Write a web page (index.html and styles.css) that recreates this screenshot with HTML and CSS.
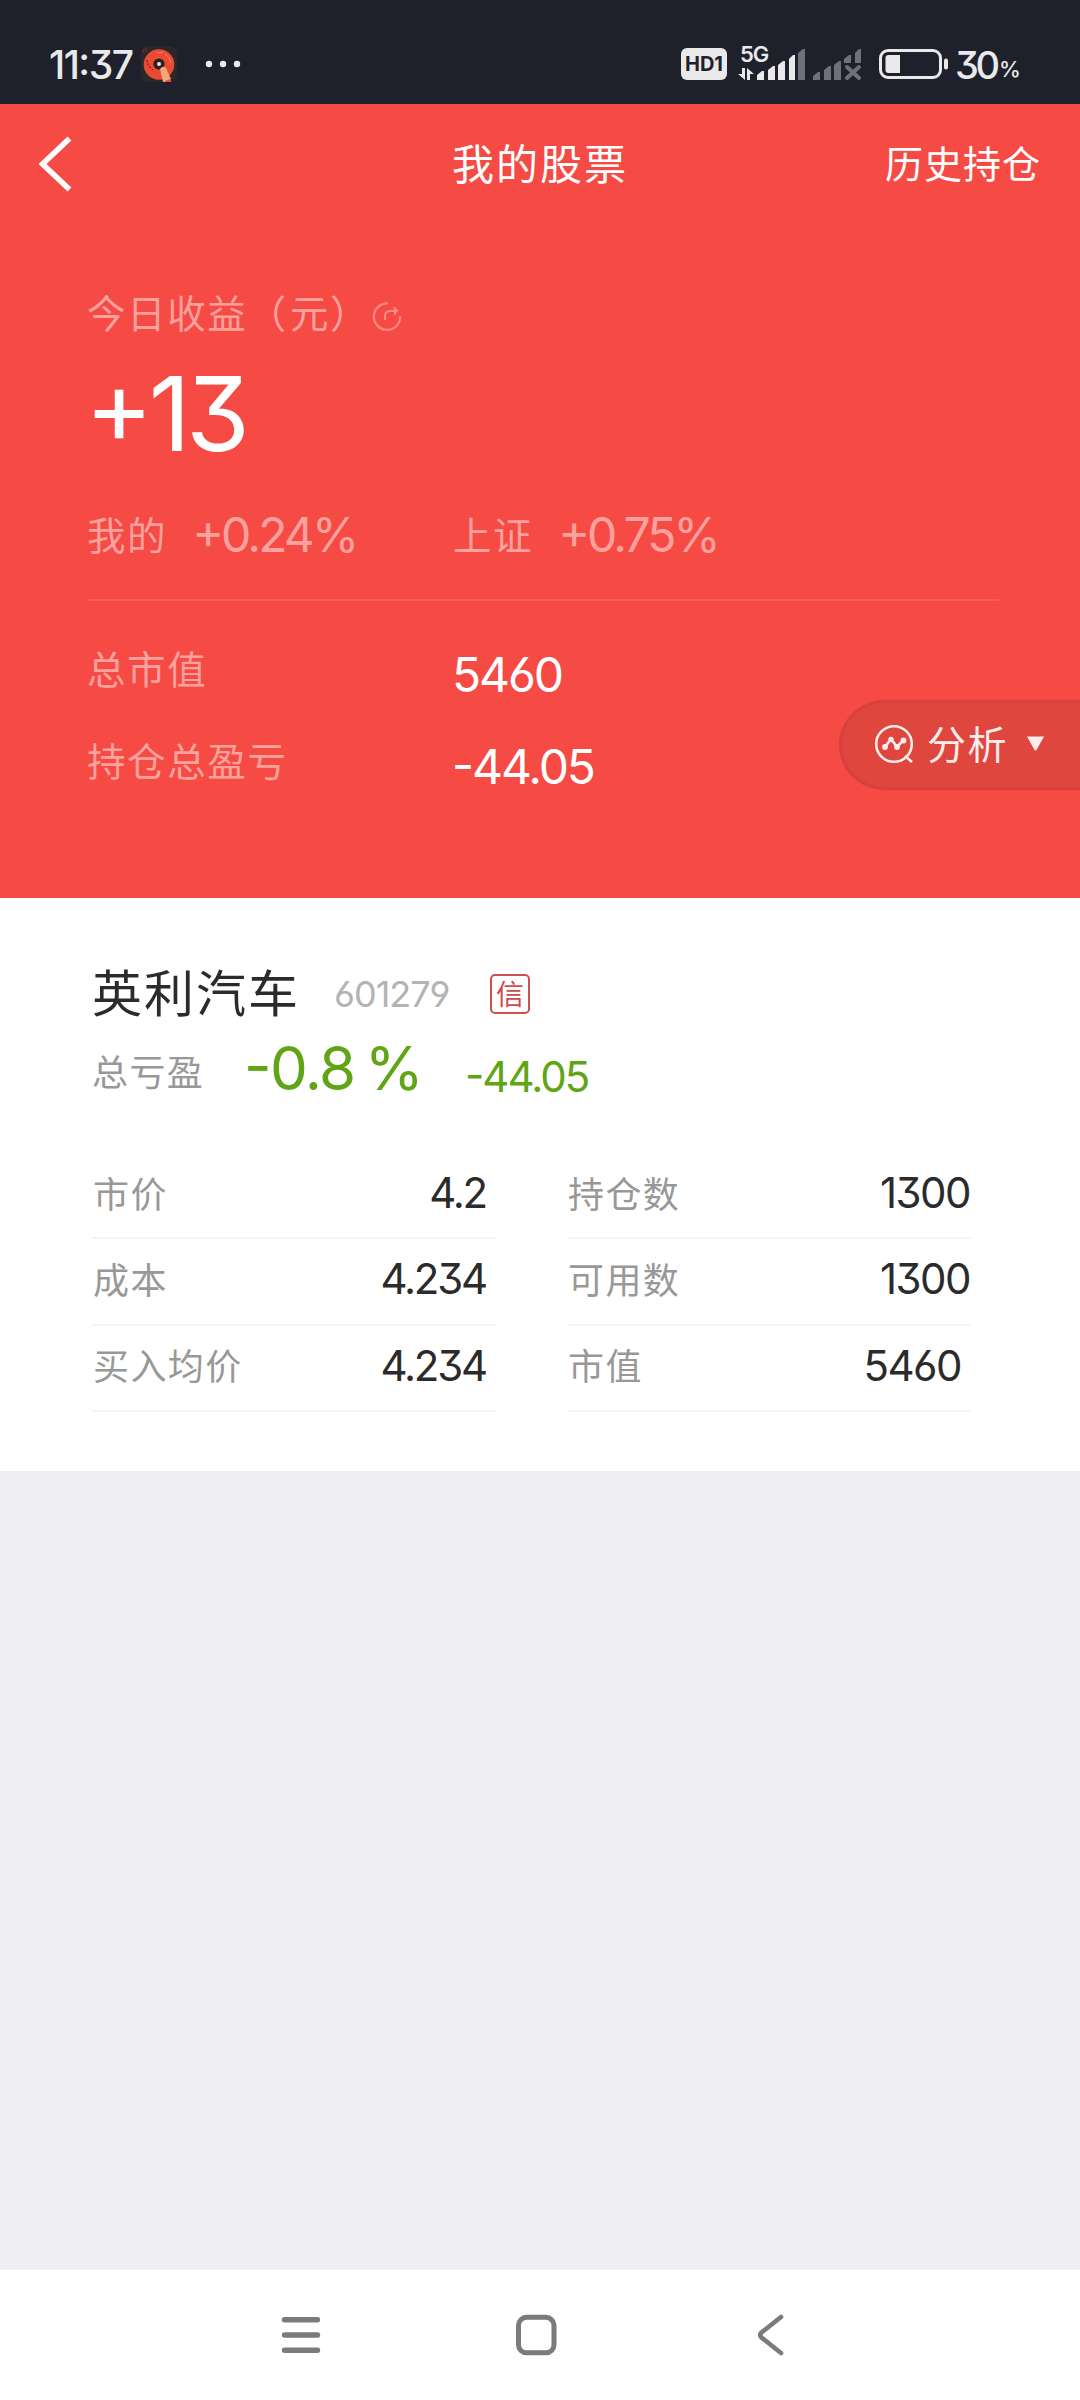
FILE: index.html
```html
<!DOCTYPE html>
<html lang="zh-CN">
<head>
<meta charset="utf-8">
<title>我的股票</title>
<link rel="stylesheet" href="styles.css">
</head>
<body>
<div class="status num">
  <span class="clock">11:37</span>
  <svg class="app-icon" width="36" height="36" viewBox="0 0 36 36">
    <rect width="36" height="36" rx="7" fill="#2a2828"/>
    <circle cx="18" cy="18.500" r="15.300" fill="#ea4c33"/>
    <path d="M6 14A13 13 0 0 0 12 24" fill="none" stroke="#6b221c" stroke-width="1.200" stroke-dasharray="2 1.500"/>
    <path d="M16 6.500Q19 7.500 22 6M24 8Q29 11 30 17" fill="none" stroke="#f58072" stroke-width="1"/>
    <path d="M2 7V3M5 6V2" stroke="#7a2f28" stroke-width="1"/>
    <circle cx="18" cy="18" r="5.600" fill="#2a2020"/>
    <circle cx="18" cy="18" r="2" fill="#f4e4dc"/>
    <path d="M19 23Q22 19 25 22L30 33L24 36H22Z" fill="#f2a679"/>
    <path d="M24 35L30 33V36H24Z" fill="#ea4c33"/>
  </svg>
  <svg class="more" width="36" height="8" viewBox="0 0 36 8" fill="#e9e9ea"><circle cx="4" cy="4" r="3.200"/><circle cx="18" cy="4" r="3.200"/><circle cx="32" cy="4" r="3.200"/></svg>
  <span class="hd">HD1</span>
  <div class="signal">
    <span class="fiveg">5G</span>
    <svg width="124" height="36" viewBox="738 46 124 36">
      <g fill="#e9e9ea">
        <path d="M742 68h3v12l-7-6h4zM747 80V68l7 6h-4v6z"/>
        <path d="M757 80V75l5-4h2v9zM768 80V70l5-4h2v14zM778 80V65l5-4h2v19zM789 80V59l4-4h2v25z"/>
      </g>
      <g fill="#707178">
        <path d="M798 80V53l5-4h2v31zM813 80V76l5-4h2v8zM824 80V70l5-4h2v14zM834 80V65l5-4h2v19zM844 63V59l5-4h2v8zM855 63V53l4-4h2v14z"/>
      </g>
      <path d="M847 67L859 78M859 67L847 78" stroke="#707178" stroke-width="4" stroke-linecap="round"/>
    </svg>
  </div>
  <svg class="battery" width="70" height="30" viewBox="0 0 70 30">
    <rect x="1.500" y="1.500" width="60" height="27" rx="7.500" fill="none" stroke="#e9e9ea" stroke-width="3"/>
    <path d="M9.500 6H21V24H9.500Q6.500 24 6.500 21V9Q6.500 6 9.500 6Z" fill="#e9e9ea"/>
    <rect x="65" y="9.500" width="4" height="11" rx="2" fill="#e9e9ea"/>
  </svg>
  <span class="level">30</span><span class="pct">%</span>
</div>

<section class="summary">
  <header class="bar">
    <svg class="back" width="34" height="56" viewBox="0 0 34 56"><path d="M30.500 2.500L3.500 28L30.500 53.500" fill="none" stroke="#fff" stroke-width="5.500"/></svg>
    <h1 class="title">我的股票</h1>
    <span class="history">历史持仓</span>
  </header>
  <div class="today">
    <span class="lbl">今日收益<span class="paren">（</span>元）</span>
    <svg class="refresh" width="30" height="30" viewBox="0 0 30 30" fill="none" stroke="#fb8782" stroke-width="2.200"><path d="M16 1.500A13.200 13.200 0 1 0 28.200 14M13 18V14Q13 9 18 9H25"/><path d="M22 5l4 3.500l-3.500 4.500z" fill="#fb8782" stroke-width="1"/></svg>
  </div>
  <div class="gain num">+13</div>
  <div class="rates">
    <div class="rate"><span class="lbl">我的</span><span class="num rv">+0.24%</span></div>
    <div class="rate"><span class="lbl">上证</span><span class="num rv">+0.75%</span></div>
  </div>
  <div class="total first"><span class="lbl">总市值</span><span class="num tv">5460</span></div>
  <div class="total"><span class="lbl">持仓总盈亏</span><span class="num tv">-44.05</span></div>
  <div class="analysis">
    <svg width="42" height="42" viewBox="0 0 42 42" fill="none" stroke="#ffeceb" stroke-width="2.600"><circle cx="20" cy="20" r="17.800"/><path d="M31 32l7 6M11 23l6-8l6 8l6.500-7"/><g fill="#ffeceb" stroke="none"><circle cx="11" cy="23" r="2.900"/><circle cx="17" cy="15.500" r="2.700"/><circle cx="23" cy="23" r="2.900"/><circle cx="29.500" cy="16.500" r="2.900"/></g></svg>
    <span class="an-text">分析</span>
    <svg class="tri" width="19" height="15" viewBox="0 0 19 15"><path d="M1 .5H18L10.500 14Q9.500 15 8.500 14Z" fill="#ffeceb"/></svg>
  </div>
</section>

<section class="holding">
  <div class="name-row">
    <span class="name">英利汽车</span><span class="num code">601279</span><span class="badge">信</span>
  </div>
  <div class="pl-row">
    <span class="k">总亏盈</span><span class="num pl-rate">-0.8 %</span><span class="num pl">-44.05</span>
  </div>
  <div class="grid">
    <div class="cell"><span class="k">市价</span><span class="num v price">4.2</span></div>
    <div class="cell"><span class="k">持仓数</span><span class="num v">1300</span></div>
    <div class="cell"><span class="k">成本</span><span class="num v price">4.234</span></div>
    <div class="cell"><span class="k">可用数</span><span class="num v">1300</span></div>
    <div class="cell"><span class="k">买入均价</span><span class="num v price">4.234</span></div>
    <div class="cell"><span class="k">市值</span><span class="num v inset">5460</span></div>
  </div>
</section>

<nav class="nav">
  <svg width="40" height="40" viewBox="0 0 40 40" stroke="#7b7b7b" stroke-width="5.400" stroke-linecap="round"><path d="M3.500 4.700H36.500M3.500 20H36.500M3.500 35.300H36.500"/></svg>
  <svg width="42" height="42" viewBox="0 0 42 42"><rect x="3.500" y="3.300" width="35.500" height="35.500" rx="8" fill="none" stroke="#7b7b7b" stroke-width="5"/></svg>
  <svg width="28" height="42" viewBox="0 0 28 42"><path d="M25 3L5.500 18.500Q3 21 5.500 23.500L25 39" fill="none" stroke="#7b7b7b" stroke-width="4.600" stroke-linecap="round"/></svg>
</nav>
</body>
</html>
```

FILE: styles.css
```css
* { box-sizing: border-box; }
body {
  margin: 0;
  width: 1080px;
  height: 2400px;
  display: flex;
  flex-direction: column;
  background: #efeef3;
  font-family: "Noto Sans CJK SC", sans-serif;
  font-weight: 400;
  white-space: nowrap;
}
svg { display: block; flex: none; }
.num {
  font-family: Inter, "Noto Sans", sans-serif;
  font-feature-settings: "cv09", "cv03", "cv04", "case";
}

/* status bar */
.status {
  height: 104px;
  background: #1e212b;
  color: #e9e9ea;
  display: flex;
  padding-left: 49px;
  line-height: 40px;
}
.clock { width: 92px; margin-top: 45px; font-size: 39px; font-weight: 500; letter-spacing: -1.5px; }
.app-icon { margin-top: 46px; }
.more { margin: 60px 0 0 28px; }
.hd {
  width: 46px;
  height: 32px;
  margin: 48px 0 0 440px;
  border-radius: 6px;
  background: #e9e9ea;
  color: #1e212b;
  font-size: 20px;
  font-weight: 700;
  line-height: 32px;
  text-align: center;
}
.signal { position: relative; margin: 46px 0 0 11px; }
.fiveg {
  position: absolute;
  left: 2px;
  top: -4px;
  font-size: 22px;
  font-weight: 600;
  line-height: 24px;
  letter-spacing: -1px;
}
.battery { margin: 49px 0 0 17px; }
.level { width: 44px; margin: 45px 0 0 6px; font-size: 38px; font-weight: 500; letter-spacing: -3.5px; }
.pct { margin-top: 49px; font-size: 22px; font-weight: 500; }

/* red summary panel */
.summary {
  position: relative;
  height: 794px;
  background: #f64a45;
  color: #fff;
  padding-left: 87px;
}
.bar {
  height: 120px;
  margin-left: -87px;
  padding: 0 39px 4px 39px;
  display: grid;
  grid-template-columns: 200px 1fr 200px;
  align-items: center;
}
.back { margin-top: 4px; }
.title { margin: 0; font-size: 42px; font-weight: 400; letter-spacing: 2px; text-align: center; line-height: 60px; }
.history { font-size: 38px; letter-spacing: 1px; line-height: 56px; text-align: right; }
.lbl { color: #fda19d; font-size: 38.5px; letter-spacing: 1.6px; line-height: 56px; }
.today { display: flex; align-items: center; height: 56px; margin-top: 59px; gap: 2px; }
.refresh { margin-top: 11px; }
.paren { letter-spacing: 4px; }
.gain { height: 120px; margin: 15px 0 0 -2px; font-size: 103px; line-height: 120px; letter-spacing: -4.5px; }
.rates {
  display: flex;
  width: 912px;
  height: 127px;
  border-bottom: 2px solid #f95f58;
  padding-top: 31px;
}
.rate { display: flex; width: 366px; height: 56px; }
.rv { margin: 2px 0 0 25px; font-size: 48px; font-weight: 375; line-height: 56px; letter-spacing: -2.9px; color: #fda19d; }
.total { display: flex; height: 92px; line-height: 56px; }
.total.first { margin-top: 38px; }
.total .lbl { width: 365px; }
.tv { font-size: 48px; letter-spacing: -2.1px; margin-top: 8px; }
.analysis {
  position: absolute;
  right: 0;
  top: 596px;
  width: 241px;
  height: 90px;
  border: 3px solid #d8403e;
  border-right: 0;
  border-radius: 45px 0 0 45px;
  background: #de463e;
  display: flex;
  align-items: center;
  padding-left: 32px;
  color: #ffeceb;
}
.an-text { width: 84px; margin: -6px 0 0 11px; font-size: 39px; letter-spacing: 1.5px; line-height: 56px; }
.tri { margin: -4px 0 0 15px; }

/* holding card */
.holding { height: 573px; background: #fff; padding: 60px 109px 0 92px; }
.name-row { display: flex; align-items: center; height: 70px; color: #2b2b2b; }
.name { width: 242px; margin-top: -6px; font-size: 50px; letter-spacing: 2px; }
.code { width: 156px; margin-top: 2px; font-size: 36px; font-weight: 375; letter-spacing: -1px; color: #b3b3b3; }
.badge {
  width: 40px;
  height: 40px;
  margin-top: 2px;
  border: 2px solid #cf5050;
  border-radius: 5px;
  color: #d04a4a;
  font-size: 28px;
  line-height: 35px;
  text-align: center;
}
.k { font-size: 36px; letter-spacing: 1.4px; color: #989898; }
.pl-row { display: flex; align-items: center; height: 80px; color: #5fa515; }
.pl-row .k { width: 152px; margin-top: 3px; }
.pl-rate { width: 221px; font-size: 60px; letter-spacing: -1.6px; word-spacing: -5px; }
.pl { margin-top: 16px; font-size: 42px; letter-spacing: -2px; }
.grid {
  display: grid;
  grid-template-columns: 404px 404px;
  grid-auto-rows: 86.3px;
  column-gap: 71px;
  margin-top: 45px;
}
.cell {
  display: flex;
  justify-content: space-between;
  align-items: center;
  padding: 0 10px 5px 1px;
  border-bottom: 2px solid #f5f5f5;
}
.cell .k { margin-top: -2px; }
.cell:nth-child(even) { padding-right: 1px; }
.v { font-size: 42px; letter-spacing: -1.5px; color: #2b2b2b; }
.price { letter-spacing: -2.2px; }
.inset { margin-right: 9px; }

/* system navigation */
.nav {
  height: 130px;
  margin-top: auto;
  background: #fff;
  display: grid;
  grid-template-columns: 234px 240.5px 28px;
  align-items: center;
  padding-left: 281px;
}
```
